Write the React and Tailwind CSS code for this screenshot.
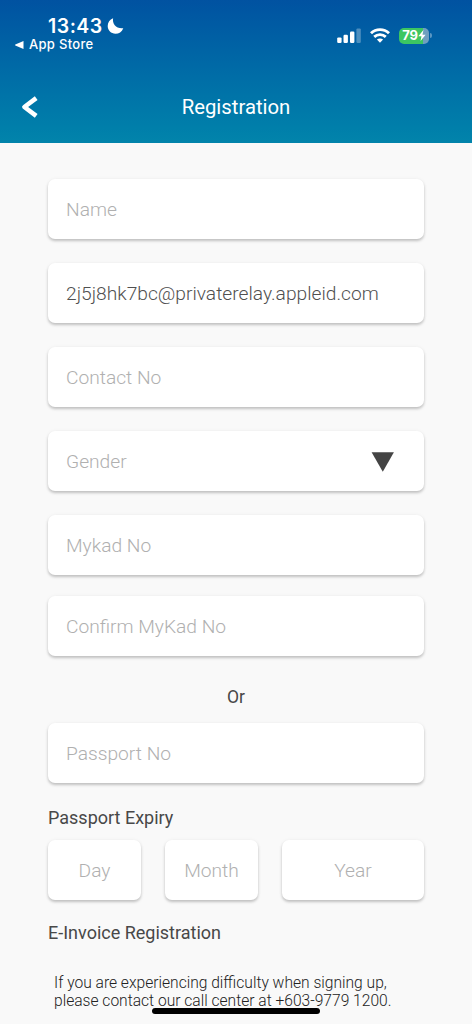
import { useState } from 'react';

const fieldClass =
  'h-[60px] rounded-[7px] bg-white text-[19.2px] font-light text-[#505050] placeholder:text-[#b0b0b0] outline-none shadow-[0_2px_3px_rgba(0,0,0,0.22),0_0_4px_rgba(0,0,0,0.04)]';

const Field = ({ className = '', ...props }) => (
  <input type="text" className={`${fieldClass} block w-full px-[18px] ${className}`} {...props} />
);

const DateField = ({ placeholder, className }) => (
  <input
    type="text"
    placeholder={placeholder}
    className={`${fieldClass} min-w-0 text-center ${className}`}
  />
);

const StatusBar = () => (
  <div className="flex h-[71px] justify-between pl-[15px] pr-[40px]">
    <div className="pt-[14px]">
      <div className="flex items-center gap-[4px] pl-[33px]">
        <span className="font-['Inter',sans-serif] text-[19.5px] font-semibold leading-[24px] tracking-[0.5px]">13:43</span>
        <svg className="h-[16px] w-[17px]" viewBox="0 0 16 16" fill="currentColor">
          <path d="M5.6 0.3C4.6 5.8 8.6 11 15.8 10.2C14.3 13.9 11.4 15.7 8 15.7C3.6 15.7 0.2 12.4 0.2 8C0.2 4.4 2.2 1.5 5.6 0.3Z" />
        </svg>
      </div>
      <div className="mt-[1px] flex items-center gap-[5px]">
        <svg className="h-[8px] w-[9px]" viewBox="0 0 9 8" fill="currentColor">
          <path d="M8.5 0V8L0.3 4.6Q-0.2 4 0.3 3.4Z" />
        </svg>
        <span className="font-['Inter',sans-serif] text-[13px] font-medium leading-[11px] tracking-[0.3px]">App Store</span>
      </div>
    </div>

    <div className="flex items-center gap-[9px]">
      {/* Signal */}
      <svg className="h-[16px] w-[24px]" viewBox="0 0 24 16" fill="currentColor">
        <rect x="0.2" y="9.4" width="4.4" height="5.6" rx="1.2" />
        <rect x="6.5" y="6.8" width="4.4" height="8.2" rx="1.2" />
        <rect x="13" y="3.6" width="4.4" height="11.4" rx="1.2" />
        <rect x="19.4" y="0.4" width="4.4" height="14.6" rx="1.2" opacity="0.3" />
      </svg>
      {/* Wifi */}
      <svg className="h-[15px] w-[20px]" viewBox="0 0 20 15" fill="none" stroke="currentColor" strokeWidth="2.9">
        <path d="M1 5.2C6 0.4 14 0.4 19 5.2" />
        <path d="M4.2 8.8C7.5 5.9 12.5 5.9 15.8 8.8" />
        <path d="M6.9 11.6C8.7 10.1 11.3 10.1 13.1 11.6L10 14.7Z" fill="currentColor" stroke="none" />
      </svg>
      {/* Battery */}
      <div className="flex items-center gap-[1px]">
        <div className="flex h-[16px] w-[30px] items-center justify-center rounded-[5px] bg-linear-to-r from-[#3cc661] from-80% to-[#6f9fc0] to-80%">
          <span className="font-['Inter',sans-serif] text-[13px] font-bold leading-none tracking-[-0.2px]">79</span>
          <svg className="h-[11px] w-[8px]" viewBox="0 0 7 10" fill="currentColor">
            <path d="M4.8 0L0.2 5.6H3L2.2 10L6.8 4.3H4Z" />
          </svg>
        </div>
        <div className="h-[5px] w-[2px] rounded-r-full bg-white/35"></div>
      </div>
    </div>
  </div>
);

const App = () => {
  const [email, setEmail] = useState('2j5j8hk7bc@privaterelay.appleid.com');

  return (
    <div className="relative h-[1024px] w-[472px] overflow-hidden bg-[#f9f9f9] font-['Roboto',sans-serif] text-[#484848]">
      <header className="h-[143px] bg-linear-to-b from-[#0152a1] to-[#0284ab] text-white">
        <StatusBar />
        <div className="grid h-[72px] grid-cols-[60px_1fr_60px] items-center">
          <button type="button" aria-label="Back" className="pl-[20px]">
            <svg className="h-[22px] w-[18px]" viewBox="0 0 18 22" fill="none" stroke="currentColor" strokeWidth="4.6" strokeLinejoin="round">
              <path d="M16.2 2.2L4.4 11L16.2 19.8" />
            </svg>
          </button>
          <h1 className="text-center text-[20.3px]">Registration</h1>
        </div>
      </header>

      <form className="px-[48px] pt-[36px]">
        <div className="flex flex-col gap-[24px]">
          <Field placeholder="Name" />
          <Field value={email} onChange={(e) => setEmail(e.target.value)} />
          <Field placeholder="Contact No" />
          <div className="grid items-center">
            <Field placeholder="Gender" className="col-start-1 row-start-1" />
            <svg className="col-start-1 row-start-1 mr-[30px] mt-[2px] h-[20px] w-[23px] justify-self-end" viewBox="0 0 23 20" fill="#444">
              <path d="M0.6 0.3H22.9L11.8 19.8Z" />
            </svg>
          </div>
          <Field placeholder="Mykad No" />
        </div>
        <Field placeholder="Confirm MyKad No" className="mt-[21px]" />

        <p className="pb-[20px] pt-[36px] text-center text-[17.5px] leading-[11px]">Or</p>
        <Field placeholder="Passport No" />

        <p className="mt-[23px] text-[18px] leading-[24px]">Passport Expiry</p>
        <div className="mt-[10px] flex gap-[24px]">
          <DateField placeholder="Day" className="w-[93px]" />
          <DateField placeholder="Month" className="w-[93px]" />
          <DateField placeholder="Year" className="flex-1" />
        </div>

        <p className="mt-[21px] text-[18px] leading-[24px]">E-Invoice Registration</p>
        <p className="mt-[29px] pl-[6px] text-[15.6px] font-light leading-[18px] text-[#222] whitespace-nowrap">
          If you are experiencing difficulty when signing up,
          <br />
          please contact our call center at +603-9779 1200.
        </p>
      </form>

      {/* Home indicator */}
      <div className="absolute bottom-[10px] left-[152px] h-[6px] w-[168px] rounded-full bg-black"></div>
    </div>
  );
};

export default App;
